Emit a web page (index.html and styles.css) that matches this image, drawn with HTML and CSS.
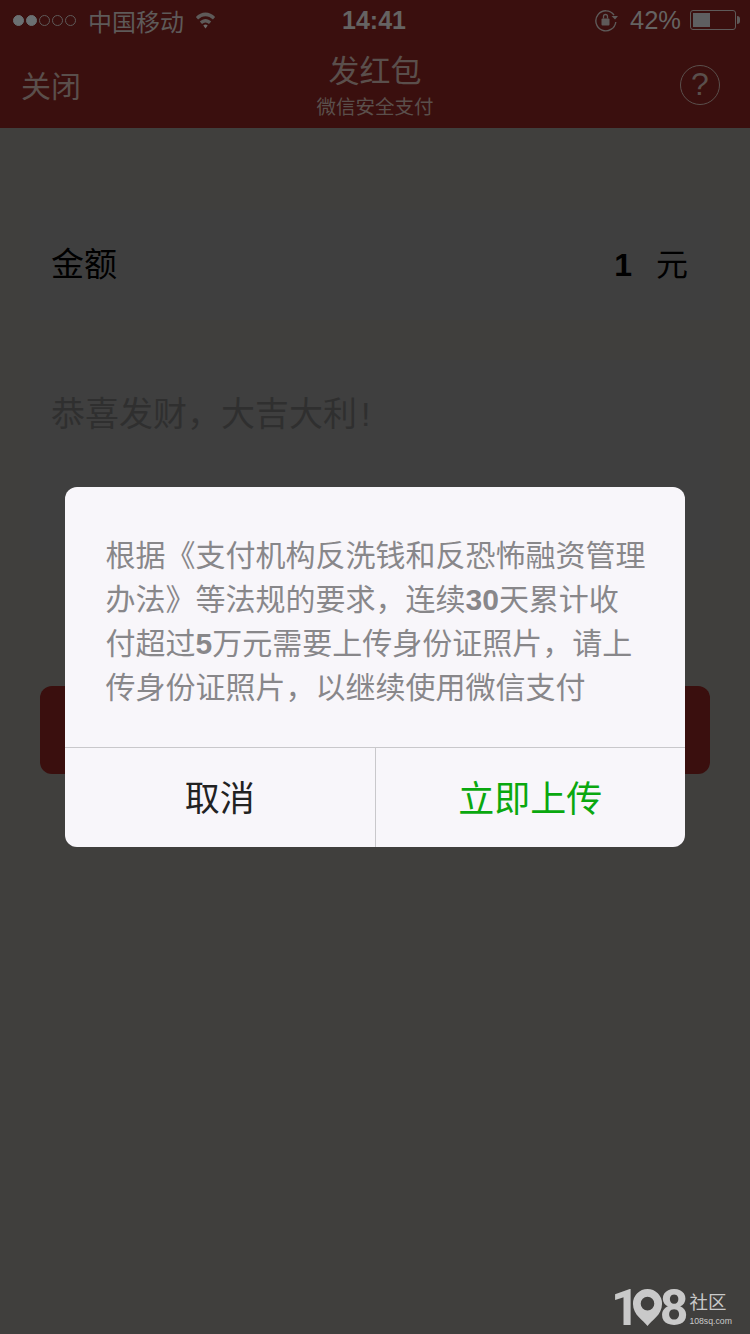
FILE: index.html
```html
<!DOCTYPE html>
<html lang="zh-CN">
  <head>
    <meta charset="UTF-8" />
    <meta name="viewport" content="width=device-width, initial-scale=1.0" />
    <title>发红包</title>
    <link rel="stylesheet" href="styles.css">
  </head>
  <body>
    <div class="status-bar">
      <div class="status-left">
        <div class="signal">
          <span class="dot full"></span>
          <span class="dot full"></span>
          <span class="dot"></span>
          <span class="dot"></span>
          <span class="dot"></span>
        </div>
        <span class="carrier">中国移动</span>
        <svg class="wifi" width="21" height="18" viewBox="0 0 24 18" preserveAspectRatio="none">
          <path d="M1 6 C7 0 17 0 23 6 L20.5 8.5 C15.5 4 8.5 4 3.500 8.500 Z" fill="#5e5a59" />
          <path d="M5.500 10.500 C9.500 7 14.500 7 18.500 10.500 L16 13 C13.500 11 10.500 11 8 13 Z" fill="#5e5a59" />
          <path d="M9.500 14.500 C11 13.300 13 13.300 14.500 14.500 L12 17.500 Z" fill="#6e6a69" />
        </svg>
      </div>
      <span class="clock">14:41</span>
      <div class="status-right">
        <svg class="rotation-lock" width="24" height="24" viewBox="0 0 24 24" fill="none">
          <path d="M20 7 A10 10 0 1 0 21.800 14" stroke="#5e5a59" stroke-width="1.400" />
          <path d="M17.500 8 L24 8 L21 11.500 Z" fill="#5e5a59" />
          <rect x="7.500" y="10.500" width="8" height="7" rx="1" fill="#5e5a59" />
          <path d="M9.500 10.500 V8.500 A2 2 0 0 1 13.500 8.500 V10.500" stroke="#5e5a59" stroke-width="1.300" />
        </svg>
        <span class="battery-text">42%</span>
        <div class="battery">
          <div class="battery-level"></div>
        </div>
        <span class="battery-tip"></span>
      </div>
    </div>

    <div class="nav-bar">
      <span class="nav-close">关闭</span>
      <div class="nav-title">
        <div class="title-main">发红包</div>
        <div class="title-sub">微信安全支付</div>
      </div>
      <span class="nav-help">?</span>
    </div>

    <div class="content">
      <div class="card amount-card">
        <span>金额</span>
        <span class="amount"><b>1</b>元</span>
      </div>
      <div class="card memo-card">恭喜发财，大吉大利<span class="memo-mark">!</span></div>
      <div class="send-button"></div>
    </div>

    <div class="overlay-dialog">
      <div class="dialog-body">
        根据《支付机构反洗钱和反恐怖融资管理<br />
        办法》等法规的要求，连续<b>30</b>天累计收<br />
        付超过<b>5</b>万元需要上传身份证照片，请上<br />
        传身份证照片，以继续使用微信支付
      </div>
      <div class="dialog-actions">
        <div class="dialog-button">取消</div>
        <div class="dialog-button primary">立即上传</div>
      </div>
    </div>

    <div class="watermark">
      <div class="mark-number">
        <span class="mark-one">1</span>
        <svg class="mark-pin" width="31" height="39" viewBox="0 0 32 40">
          <path fill-rule="evenodd" fill="#c9c9c9" d="M16 39 C12 33 1 28 1 16 A15 15 0 0 1 31 16 C31 28 20 33 16 39 Z M16 9 A7 7 0 1 0 16 23 A7 7 0 1 0 16 9 Z" />
        </svg>
        <span>8</span>
      </div>
      <div class="mark-text">
        <div class="mark-name">社区</div>
        <div class="mark-url">108sq.com</div>
      </div>
    </div>
  </body>
</html>
```

FILE: styles.css
```css
body {
  margin: 0;
  width: 750px;
  height: 1334px;
  position: relative;
  overflow: hidden;
  background-color: #403f3d;
  font-family: "Liberation Sans", "Noto Sans CJK SC", sans-serif;
}

.status-bar {
  height: 40px;
  box-sizing: border-box;
  padding: 0 10px 0 13px;
  background-color: #3a0f0e;
  color: #5e5a59;
  display: flex;
  align-items: center;
  justify-content: space-between;
  position: relative;
}

.status-left {
  display: flex;
  align-items: center;
}

.signal {
  display: flex;
  gap: 2px;
}

.dot {
  width: 11px;
  height: 11px;
  box-sizing: border-box;
  border: 1px solid #5e5a59;
  border-radius: 50%;
}

.dot.full {
  background-color: #6b7072;
  border-color: #6b7072;
}

.carrier {
  font-size: 24px;
  margin-left: 12px;
}

.wifi {
  margin-left: 11px;
}

.clock {
  font-size: 25px;
  font-weight: bold;
  color: #656362;
  position: absolute;
  left: 342px;
}

.status-right {
  display: flex;
  align-items: center;
}

.battery-text {
  font-size: 25.500px;
  color: #656362;
  margin-left: 12px;
  margin-right: 9px;
}

.battery {
  width: 46px;
  height: 20px;
  box-sizing: border-box;
  border: 1px solid #5e5a59;
  border-radius: 3px;
  padding: 2px;
}

.battery-level {
  width: 17px;
  height: 100%;
  background-color: #5e5f61;
}

.battery-tip {
  width: 3px;
  height: 8px;
  margin-left: 1px;
  background-color: #5e5a59;
  border-radius: 0 3px 3px 0;
}

.nav-bar {
  height: 88px;
  box-sizing: border-box;
  padding: 0 30px 0 21px;
  background-color: #3a0f0e;
  color: #5a4f4c;
  display: flex;
  align-items: center;
  justify-content: space-between;
  position: relative;
}

.nav-close {
  font-size: 30px;
}

.nav-title {
  position: absolute;
  left: 0;
  right: 0;
  top: 12px;
  text-align: center;
}

.title-main {
  font-size: 31px;
  line-height: 40px;
}

.title-sub {
  font-size: 19.500px;
  line-height: 24px;
  margin-top: 3px;
}

.nav-help {
  width: 40px;
  height: 40px;
  box-sizing: border-box;
  border: 1.500px solid #5a4f4c;
  border-radius: 50%;
  font-size: 32px;
  line-height: 37px;
  text-align: center;
  margin-top: 2px;
}

.content {
  display: flex;
  flex-direction: column;
}

.card {
  margin: 0 30px;
  background-color: #3f3f3f;
  box-sizing: border-box;
}

.amount-card {
  height: 110px;
  margin-top: 82px;
  padding: 0 32px 7px 21px;
  color: #000;
  font-size: 33px;
  display: flex;
  align-items: center;
  justify-content: space-between;
}

.amount {
  font-size: 32px;
}

.amount b {
  font-weight: bold;
  margin-right: 24px;
}

.memo-card {
  height: 200px;
  margin-top: 40px;
  padding: 31px 21px;
  color: #2f2f2f;
  font-size: 34px;
  line-height: 46px;
}

.memo-mark {
  margin-left: 4px;
}

.send-button {
  height: 88px;
  margin: 126px 40px 0;
  background-color: #3a0f0e;
  border-radius: 12px;
}

.overlay-dialog {
  position: absolute;
  left: 65px;
  top: 487px;
  width: 620px;
  height: 360px;
  background-color: #f8f6fa;
  border-radius: 12px;
  overflow: hidden;
  display: flex;
  flex-direction: column;
}

.dialog-body {
  height: 260px;
  box-sizing: border-box;
  padding: 47px 0 0 40.500px;
  color: #88878a;
  font-size: 30px;
  line-height: 44px;
  white-space: nowrap;
}

.dialog-actions {
  flex: 1;
  display: flex;
  border-top: 1px solid #c9c8cb;
}

.dialog-button {
  width: 310px;
  padding-bottom: 4px;
  font-size: 35px;
  color: #222;
  display: flex;
  align-items: center;
  justify-content: center;
}

.dialog-button.primary {
  font-size: 36px;
  color: #0aa80f;
  border-left: 1px solid #c9c8cb;
}

.watermark {
  position: absolute;
  left: 611px;
  top: 1287px;
  height: 41px;
  display: flex;
  color: #c9c9c9;
}

.mark-number {
  display: flex;
  align-items: center;
  font-family: Roboto, sans-serif;
  font-size: 50px;
  font-weight: 700;
}

.mark-one {
  letter-spacing: -8px;
}

.mark-pin {
  margin-right: -3px;
}

.mark-text {
  margin-left: 1px;
  padding-top: 5px;
}

.mark-name {
  font-size: 18.500px;
  line-height: 22px;
}

.mark-url {
  font-size: 8.700px;
  line-height: 14px;
  font-family: "Liberation Sans", sans-serif;
}
```
